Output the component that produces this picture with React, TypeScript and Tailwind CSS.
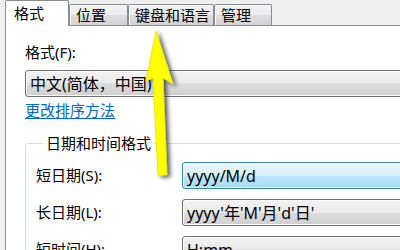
import React from "react";

const font = { fontFamily: "'Noto Sans', 'Noto Sans CJK SC', sans-serif" };

function Tab({ label, selected, w }: { label: string; selected?: boolean; w: string }) {
  if (selected) {
    return (
      <div className={`relative z-10 -mb-px h-[26px] ${w} bg-white border border-b-0 border-[#898c95] rounded-t-[2px] pl-[8px] pt-[1px] text-[15px] leading-[22px] text-black`}>
        {label}
      </div>
    );
  }
  return (
    <div className={`h-[21px] ${w} bg-[linear-gradient(#f3f3f3_0%,#ececec_50%,#dedede_50%,#d3d3d3_100%)] border border-b-0 border-[#898c95] rounded-t-[2px] pl-[6px] text-[15px] leading-[20px] text-black shadow-[inset_1px_1px_0_#ffffff]`}>
      {label}
    </div>
  );
}

function Combo({ text, active }: { text: string; active?: boolean }) {
  return (
    <div
      className={`h-[27px] flex-1 rounded-[3px] border pl-[4px] flex items-center text-[16px] text-black ${
        active
          ? "border-[#3c7fb1] bg-[linear-gradient(#eaf6fd_0%,#d9f0fc_50%,#bee6fd_50%,#a7d9f5_100%)]"
          : "border-[#707070] bg-[linear-gradient(#f2f2f2_0%,#ebebeb_50%,#dddddd_50%,#cfcfcf_100%)]"
      } shadow-[inset_0_0_0_1px_#fcfcfc]`}
    >
      {text}
    </div>
  );
}

export default function App() {
  return (
    <div className="w-[400px] h-[250px] overflow-hidden bg-[#f0f0f0] relative" style={font}>
      <div className="flex items-end h-[25px] pl-[5px]">
        <Tab label="格式" selected w="w-[64px]" />
        <Tab label="位置" w="w-[59px]" />
        <Tab label="键盘和语言" w="w-[86px]" />
        <Tab label="管理" w="w-[58px]" />
      </div>
      <div className="ml-[5px] w-[440px] h-[240px] bg-white border-l border-t border-[#898c95] pl-[19px] pr-[20px]">
        <div className="mt-[15px] text-[15px] leading-[22px] text-black">格式(F):</div>
        <div className="mt-[7px] flex">
          <Combo text="中文(简体，中国)" />
        </div>
        <div className="mt-[3px] text-[15px] leading-[21px] text-[#0066cc] underline underline-offset-2">更改排序方法</div>
        <fieldset className="mt-[12px] border border-[#d5dfe5] rounded-[3px] pl-[10px] pr-[10px] pb-[10px]">
          <legend className="ml-[7px] px-[3px] text-[15px] leading-[20px] text-black">日期和时间格式</legend>
          <div className="pt-[9px] flex flex-col gap-[10px]">
            <div className="flex items-center">
              <div className="w-[146px] text-[15px] text-black">短日期(S):</div>
              <Combo text="yyyy/M/d" active />
            </div>
            <div className="flex items-center">
              <div className="w-[146px] text-[15px] text-black">长日期(L):</div>
              <Combo text="yyyy'年'M'月'd'日'" />
            </div>
            <div className="flex items-center">
              <div className="w-[146px] text-[15px] text-black">短时间(H):</div>
              <Combo text="H:mm" />
            </div>
          </div>
        </fieldset>
      </div>
      <svg className="absolute left-0 top-0 pointer-events-none" width="400" height="250" viewBox="0 0 400 250">
        <defs>
          <filter id="sh" x="-50%" y="-20%" width="200%" height="140%">
            <feDropShadow dx="3" dy="2" stdDeviation="2" floodColor="#222" floodOpacity="0.75" />
          </filter>
        </defs>
        <polygon
          points="156,31 173,84 163,78 167,175 158,175 153,78 146,81"
          fill="#ffff00"
          stroke="#e6e600"
          strokeWidth="0.8"
          filter="url(#sh)"
        />
      </svg>
    </div>
  );
}
